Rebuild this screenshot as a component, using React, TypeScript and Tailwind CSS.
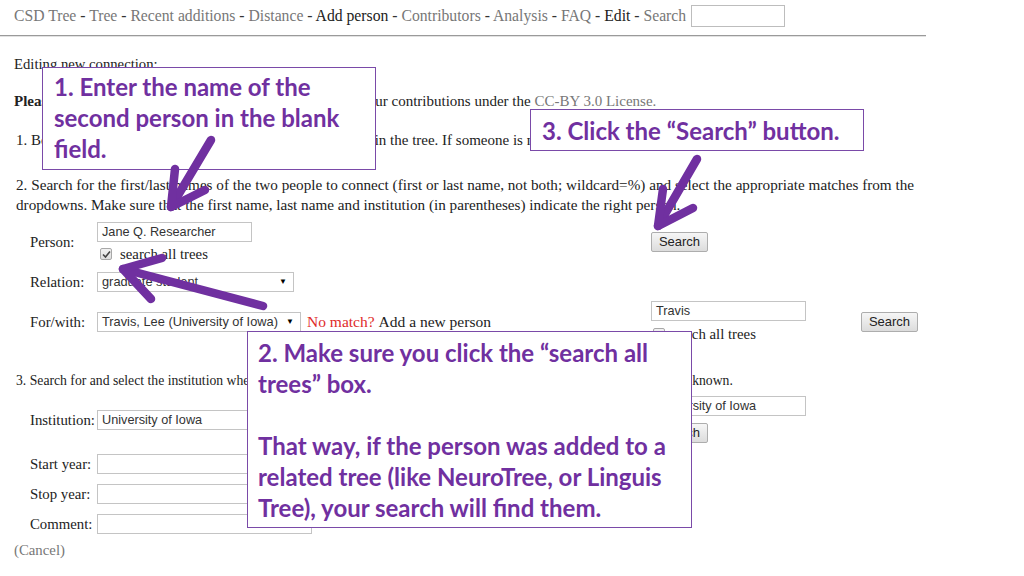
import React from "react";

const navItems: [string, boolean][] = [
  ["CSD Tree", false],
  ["Tree", false],
  ["Recent additions", false],
  ["Distance", false],
  ["Add person", true],
  ["Contributors", false],
  ["Analysis", false],
  ["FAQ", false],
  ["Edit", true],
  ["Search", false],
];

function TextBox({ value, className }: { value?: string; className: string }) {
  return (
    <div
      className={`h-[20px] border border-[#c4c4c4] bg-white px-[4px] font-['Liberation_Sans',sans-serif] text-[12.7px] leading-[18px] text-[#333] ${className}`}
    >
      {value}
    </div>
  );
}

function Select({ value, className }: { value: string; className: string }) {
  return (
    <div
      className={`flex h-[20px] items-center justify-between border border-[#c4c4c4] bg-white pl-[4px] pr-[6px] font-['Liberation_Sans',sans-serif] text-[12.8px] text-[#333] ${className}`}
    >
      <span>{value}</span>
      <span className="text-[8px] text-black">▼</span>
    </div>
  );
}

function Button({ children }: { children: React.ReactNode }) {
  return (
    <div className="flex h-[20px] w-[57px] items-center justify-center rounded-[2px] border border-[#adadad] bg-gradient-to-b from-[#f6f6f6] to-[#dcdcdc] font-['Liberation_Sans',sans-serif] text-[13px] text-[#222]">
      {children}
    </div>
  );
}

function Check({ checked }: { checked?: boolean }) {
  return (
    <span className="flex h-[12px] w-[12px] shrink-0 items-center justify-center rounded-[2px] border border-[#a8a8a8] bg-gradient-to-b from-[#f2f2f2] to-[#dedede]">
      {checked && (
        <svg width="9" height="9" viewBox="0 0 9 9">
          <path d="M1 4.5 L3.5 7 L8 1.5" fill="none" stroke="#444" strokeWidth="1.6" />
        </svg>
      )}
    </span>
  );
}

function Callout({ className, children }: { className: string; children: React.ReactNode }) {
  return (
    <div
      className={`absolute border border-[#7a4aa8] bg-white font-['Lato',sans-serif] text-[24px] font-bold leading-[31px] text-[#7030a0] ${className}`}
    >
      {children}
    </div>
  );
}

export default function App() {
  return (
    <div className="relative h-[576px] w-[1024px] overflow-hidden bg-white font-['Liberation_Serif',serif] text-[15px] leading-[20px] text-[#222]">
      {/* top nav */}
      <nav className="flex h-[31px] items-center pl-[14px] text-[15.7px] text-[#333]">
        {navItems.map(([label, dark], i) => (
          <span key={label} className="whitespace-pre">
            {i > 0 && " - "}
            <span className={dark ? "text-[#222]" : "text-[#777]"}>{label}</span>
          </span>
        ))}
        <div className="ml-[5px] h-[22px] w-[94px] border border-[#bdbdbd]" />
      </nav>
      <hr className="mt-[4px] w-[926px] border-0 border-t border-b border-t-[#9a9a9a] border-b-[#e2e2e2]" />

      <main className="w-[926px] pl-[14px] pr-[8px]">
        <p className="mt-[17px] text-[14.7px]">Editing new connection:</p>
        <p className="mt-[17px]">
          <b>Please note:</b> by adding data to the tree you agree to offer your contributions under the{" "}
          <span className="text-[#777]">CC-BY 3.0 License.</span>
        </p>
        <p className="mt-[19px] pl-[2px]">
          1. Be sure that both people you wish to connect are already in the tree. If someone is not in the tree, add them first.
        </p>
        <p className="mt-[25px] pl-[2px] text-[15.2px]">
          2. Search for the first/last names of the two people to connect (first or last name, not both; wildcard=%) and select the appropriate matches from the dropdowns. Make sure that the first name, last name and institution (in parentheses) indicate the right person.
        </p>

        <div className="mt-[7px] flex flex-col gap-[10px] pl-[16px] text-[14.8px]">
          <div className="flex items-center">
            <span className="w-[67px]">Person:</span>
            <div className="flex w-[554px] flex-col">
              <TextBox value="Jane Q. Researcher" className="w-[155px]" />
              <label className="mt-[4px] flex items-center gap-[8px] pl-[3px] leading-[16px]">
                <Check checked />
                search all trees
              </label>
            </div>
            <Button>Search</Button>
          </div>

          <div className="flex items-center">
            <span className="w-[67px]">Relation:</span>
            <Select value="graduate student" className="w-[197px]" />
          </div>

          <div className="-mt-[1px] flex items-center">
            <span className="w-[67px]">For/with:</span>
            <div className="flex w-[554px] items-center text-[15.5px]">
              <Select value="Travis, Lee (University of Iowa)" className="w-[204px]" />
              <span className="ml-[6px] text-[#e02a2a]">No match?</span>
              <span className="ml-[4px]">Add a new person</span>
            </div>
            <div className="flex w-[210px] flex-col">
              <TextBox value="Travis" className="w-[155px]" />
              <label className="mt-[5px] flex items-center gap-[3px] pl-[2px] leading-[16px]">
                <Check />
                search all trees
              </label>
            </div>
            <Button>Search</Button>
          </div>
        </div>

        <p className="mt-[29px] pl-[2px] text-[13.7px]">
          3. Search for and select the institution where the relationship took place (at the time of their training), or leave it blank if unknown.
        </p>

        <div className="mt-[5px] flex flex-col pl-[16px] text-[14.8px]">
          <div className="flex items-center">
            <span className="w-[67px]">Institution:</span>
            <div className="w-[554px]">
              <TextBox value="University of Iowa" className="w-[215px]" />
            </div>
            <div className="flex flex-col gap-[7px]">
              <TextBox value="University of Iowa" className="w-[155px]" />
              <Button>Search</Button>
            </div>
          </div>
          <div className="mt-[11px] flex flex-col gap-[10px]">
            <div className="flex items-center">
              <span className="w-[67px]">Start year:</span>
              <TextBox className="w-[215px]" />
            </div>
            <div className="flex items-center">
              <span className="w-[67px]">Stop year:</span>
              <TextBox className="w-[215px]" />
            </div>
            <div className="flex items-center">
              <span className="w-[67px]">Comment:</span>
              <TextBox className="w-[215px]" />
            </div>
          </div>
        </div>

        <p className="mt-[6px] text-[14.8px] text-[#777]">(Cancel)</p>
      </main>

      {/* annotation callouts */}
      <Callout className="left-[42px] top-[67px] h-[103px] w-[334px] pl-[11px] pt-[3px]">
        1. Enter the name of the
        <br />
        second person in the blank
        <br />
        field.
      </Callout>
      <Callout className="left-[530px] top-[109px] flex h-[42px] w-[334px] items-center pl-[11px]">
        3. Click the “Search” button.
      </Callout>
      <Callout className="left-[247px] top-[331px] h-[197px] w-[445px] pl-[10px] pt-[5px] leading-[30.6px]">
        2. Make sure you click the “search all
        <br />
        trees” box.
        <br />
        <br />
        That way, if the person was added to a
        <br />
        related tree (like NeuroTree, or Linguis
        <br />
        Tree), your search will find them.
      </Callout>

      {/* arrows */}
      <svg className="pointer-events-none absolute left-0 top-0" width="1024" height="576" viewBox="0 0 1024 576">
        <g fill="none" stroke="#7030a0" strokeWidth="8.5" strokeLinecap="round" strokeLinejoin="round">
          <path d="M211 140 L171 207" />
          <path d="M175 169 L171 207 L205 190" />
          <path d="M263 306 L123 269" />
          <path d="M162 258 L123 269 L151 299" />
          <path d="M697 159 L658 226" />
          <path d="M663 189 L658 226 L693 208" />
        </g>
      </svg>
    </div>
  );
}
